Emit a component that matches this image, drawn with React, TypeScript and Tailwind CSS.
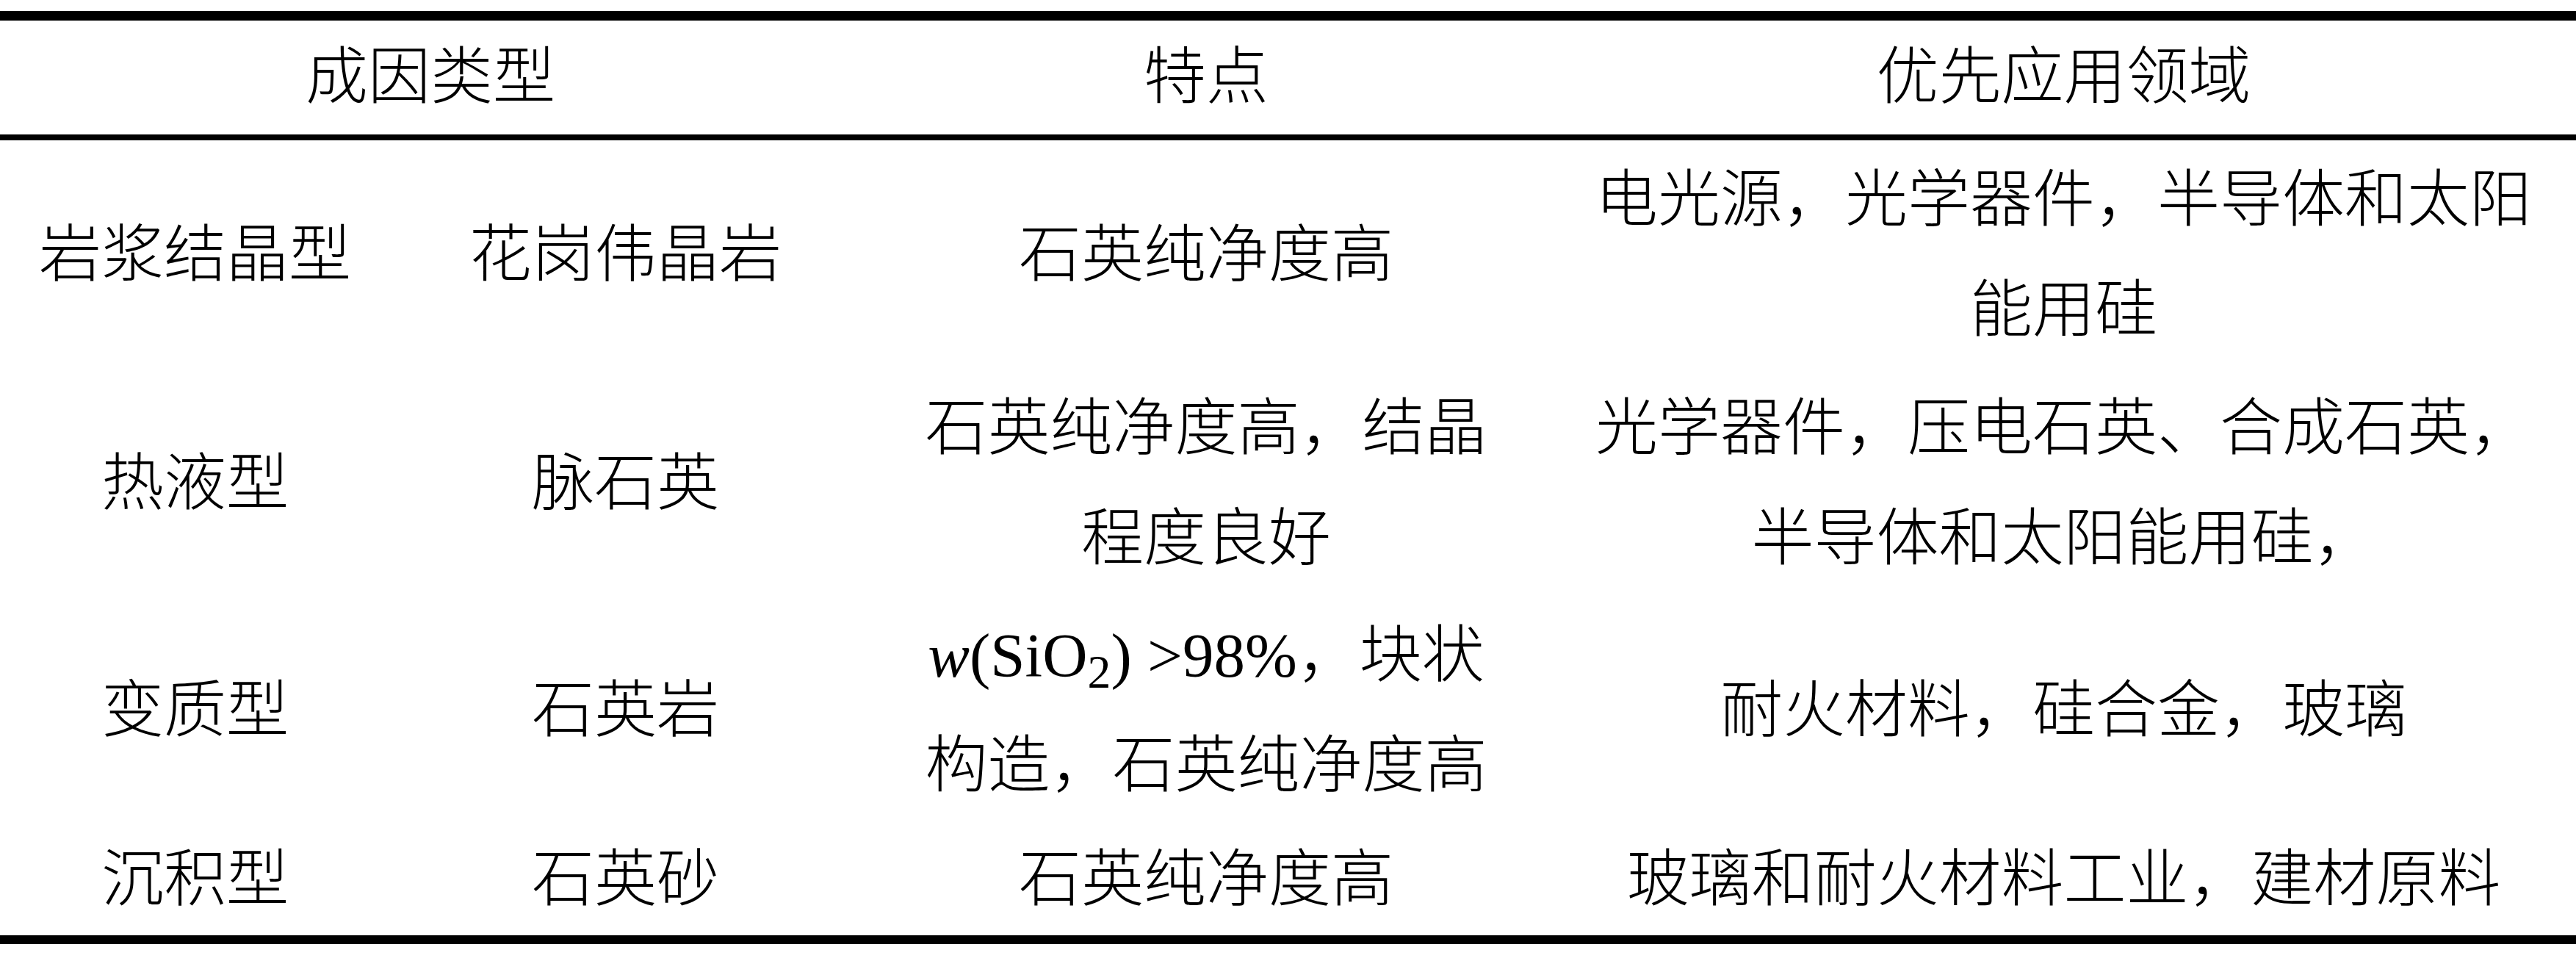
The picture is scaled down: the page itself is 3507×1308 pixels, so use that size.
import React from "react";

type Row = {
  type: string;
  rock: string;
  feature: React.ReactNode;
  use: React.ReactNode;
  h: string;
};

const rows: Row[] = [
  {
    type: "岩浆结晶型",
    rock: "花岗伟晶岩",
    feature: "石英纯净度高",
    use: (
      <>
        电光源，光学器件，半导体和太阳
        <br />
        能用硅
      </>
    ),
    h: "h-[312px]",
  },
  {
    type: "热液型",
    rock: "脉石英",
    feature: (
      <>
        石英纯净度高，结晶
        <br />
        程度良好
      </>
    ),
    use: (
      <>
        光学器件，压电石英、合成石英，
        <br />
        半导体和太阳能用硅，
      </>
    ),
    h: "h-[309px]",
  },
  {
    type: "变质型",
    rock: "石英岩",
    feature: (
      <>
        <i>w</i>(SiO<sub>2</sub>) &gt;98%，块状
        <br />
        构造，石英纯净度高
      </>
    ),
    use: "耐火材料，硅合金，玻璃",
    h: "h-[309px]",
  },
  {
    type: "沉积型",
    rock: "石英砂",
    feature: "石英纯净度高",
    use: "玻璃和耐火材料工业，建材原料",
    h: "h-[152px]",
  },
];

function Cell({ children }: { children: React.ReactNode }) {
  return <div className="text-center leading-[150px] whitespace-nowrap">{children}</div>;
}

export default function App() {
  return (
    <div className="w-[3507px] h-[1308px] bg-white pt-[15px] text-black text-[85px] font-light font-['Liberation_Serif','Noto_Sans_CJK_SC',serif]">
      {/* header */}
      <div className="grid grid-cols-[531px_641px_940px_1395px] items-center h-[176px] border-t-[13px] border-b-[8px] border-black">
        <div className="col-span-2 text-center leading-[155px]">成因类型</div>
        <div className="text-center leading-[155px]">特点</div>
        <div className="text-center leading-[155px]">优先应用领域</div>
      </div>

      {/* body */}
      <div className="border-b-[12px] border-black">
        {rows.map((row) => (
          <div key={row.type} className={`grid grid-cols-[531px_641px_940px_1395px] items-center ${row.h}`}>
            <Cell>{row.type}</Cell>
            <Cell>{row.rock}</Cell>
            <Cell>{row.feature}</Cell>
            <Cell>{row.use}</Cell>
          </div>
        ))}
      </div>
    </div>
  );
}
